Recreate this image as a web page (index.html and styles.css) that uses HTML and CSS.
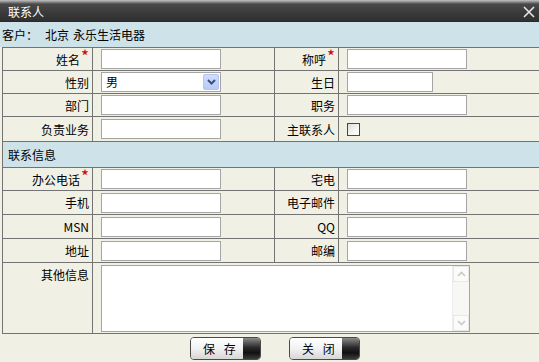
FILE: index.html
```html
<!DOCTYPE html>
<html lang="zh-CN">
<head>
  <meta charset="UTF-8">
  <title>联系人</title>
  <link rel="stylesheet" href="styles.css">
</head>
<body>
  <div class="dialog">
    <div class="titlebar">
      <span class="title">联系人</span>
      <svg class="close" width="12" height="12" viewBox="0 0 12 12">
        <path d="M1 1 L11 11 M11 1 L1 11" stroke="#e6e6e6" stroke-width="1.6" fill="none"/>
      </svg>
    </div>

    <div class="customer">
      <span class="cust-label">客户：</span>
      <span class="cust-city">北京</span>
      <span class="cust-name">永乐生活电器</span>
    </div>

    <table class="form">
      <colgroup>
        <col class="c1">
        <col class="c2">
        <col class="c3">
        <col>
      </colgroup>
      <tr>
        <th>姓名<span class="req">*</span></th>
        <td><input class="text" type="text"></td>
        <th>称呼<span class="req">*</span></th>
        <td><input class="text" type="text"></td>
      </tr>
      <tr>
        <th>性别</th>
        <td>
          <div class="select">
            <span class="select-value">男</span>
            <span class="select-btn">
              <svg width="9" height="6" viewBox="0 0 9 6"><path d="M1 1 L4.5 4.5 L8 1" stroke="#3d4f7a" stroke-width="2" fill="none"/></svg>
            </span>
          </div>
        </td>
        <th>生日</th>
        <td><input class="text short" type="text"></td>
      </tr>
      <tr>
        <th>部门</th>
        <td><input class="text" type="text"></td>
        <th>职务</th>
        <td><input class="text" type="text"></td>
      </tr>
      <tr class="tall">
        <th>负责业务</th>
        <td><input class="text" type="text"></td>
        <th>主联系人</th>
        <td><span class="checkbox"></span></td>
      </tr>
      <tr class="section">
        <td colspan="4">联系信息</td>
      </tr>
      <tr>
        <th>办公电话<span class="req">*</span></th>
        <td><input class="text" type="text"></td>
        <th>宅电</th>
        <td><input class="text" type="text"></td>
      </tr>
      <tr class="wide">
        <th>手机</th>
        <td><input class="text" type="text"></td>
        <th>电子邮件</th>
        <td><input class="text" type="text"></td>
      </tr>
      <tr class="wide">
        <th>MSN</th>
        <td><input class="text" type="text"></td>
        <th>QQ</th>
        <td><input class="text" type="text"></td>
      </tr>
      <tr class="wide">
        <th>地址</th>
        <td><input class="text" type="text"></td>
        <th>邮编</th>
        <td><input class="text" type="text"></td>
      </tr>
      <tr class="memo">
        <th>其他信息</th>
        <td colspan="3">
          <div class="textarea">
            <div class="textarea-body"></div>
            <div class="scrollbar">
              <span class="arrow up">
                <svg width="9" height="6" viewBox="0 0 9 6"><path d="M1 5 L4.5 1.5 L8 5" stroke="#c9c9c9" stroke-width="1.6" fill="none"/></svg>
              </span>
              <span class="arrow down">
                <svg width="9" height="6" viewBox="0 0 9 6"><path d="M1 1 L4.5 4.5 L8 1" stroke="#c9c9c9" stroke-width="1.6" fill="none"/></svg>
              </span>
            </div>
          </div>
        </td>
      </tr>
    </table>

    <div class="actions">
      <button class="btn"><span class="btn-text">保 存</span><span class="btn-end"></span></button>
      <button class="btn"><span class="btn-text">关 闭</span><span class="btn-end"></span></button>
    </div>
  </div>
</body>
</html>
```

FILE: styles.css
```css
/* Page */
body {
  margin: 0;
  font-family: "Noto Sans CJK SC", "DejaVu Sans", sans-serif;
  font-size: 12px;
  color: #000;
  background: #f1f0e5;
  overflow: hidden;
}

.dialog {
  width: 539px;
  height: 362px;
  background: #f1f0e5;
}

/* Title bar */
.titlebar {
  height: 21px;
  display: flex;
  align-items: center;
  justify-content: space-between;
  padding: 0 4px 0 8px;
  background: linear-gradient(#c2c2c2 0, #8a8a8a 2px, #4a4a4a 4px, #3a3a3a 60%, #303030 100%);
  border-bottom: 1px solid #2a2a2a;
}

.title {
  color: #fff;
  font-size: 12px;
  line-height: 21px;
  padding-top: 1px;
}

.close {
  margin-top: 2px;
}

/* Customer line */
.customer {
  height: 25px;
  display: flex;
  align-items: center;
  padding-left: 2px;
  background: #cee2e9;
}

.cust-label {
  width: 43px;
}

.cust-city {
  margin-right: 4px;
}

/* Form table */
.form {
  border-collapse: collapse;
  table-layout: fixed;
  width: 537px;
  margin-left: 2px;
}

.form .c1 { width: 90px; }
.form .c2 { width: 182px; }
.form .c3 { width: 64px; }

.form th,
.form td {
  border: 1px solid #737373;
  height: 22px;
  padding: 0;
  vertical-align: middle;
}

.form tr > :last-child {
  border-right: none;
}

.form th {
  font-weight: normal;
  text-align: right;
  padding-right: 3px;
  white-space: nowrap;
}

.form td {
  padding-left: 8px;
}

.form tr.tall th,
.form tr.tall td {
  height: 24px;
}

.form tr.wide th,
.form tr.wide td {
  height: 23px;
}

.req {
  color: #d40000;
  font-size: 17px;
  line-height: 0;
  vertical-align: 2px;
  margin-left: 1px;
}

.form tr.section td {
  height: 25px;
  padding-left: 5px;
  background: #cee2e9;
}

.form tr.memo th {
  vertical-align: top;
  padding-top: 3px;
  height: 67px;
}

.form tr.memo td {
  vertical-align: top;
  padding-top: 2px;
  height: 68px;
}

/* Inputs */
.text {
  display: block;
  box-sizing: border-box;
  width: 120px;
  height: 20px;
  margin: 0;
  padding: 0 3px;
  border: 1px solid #a5a5a5;
  background: #fff;
  font: inherit;
}

.text.short {
  width: 86px;
}

.select {
  display: flex;
  box-sizing: border-box;
  width: 120px;
  height: 20px;
  border: 1px solid #a5a5a5;
  background: #fff;
  padding: 1px;
}

.select-value {
  flex: 1;
  padding-left: 3px;
  line-height: 16px;
}

.select-btn {
  width: 16px;
  display: flex;
  align-items: center;
  justify-content: center;
  background: linear-gradient(#cfdcfd, #b8cbf8);
  border: 1px solid #b3c5f2;
  box-sizing: border-box;
  border-radius: 2px;
}

.checkbox {
  display: block;
  width: 13px;
  height: 13px;
  box-sizing: border-box;
  border: 1px solid #1c5180;
  background: linear-gradient(135deg, #dcdcd6, #f6f6f4 60%, #ffffff);
}

/* Memo */
.textarea {
  display: flex;
  box-sizing: border-box;
  width: 369px;
  height: 67px;
  border: 1px solid #a5a5a5;
  background: #fff;
}

.textarea-body {
  flex: 1;
}

.scrollbar {
  width: 16px;
  display: flex;
  flex-direction: column;
  justify-content: space-between;
  background: #f7f7f3;
  border-left: 1px solid #ededed;
}

.arrow {
  height: 16px;
  display: flex;
  align-items: center;
  justify-content: center;
  background: #fbfbf9;
  border: 1px solid #e8e8e4;
  box-sizing: border-box;
}

/* Buttons */
.actions {
  display: flex;
  justify-content: center;
  gap: 28px;
  padding: 3px 0 0 11px;
}

.btn {
  display: flex;
  width: 71px;
  height: 23px;
  padding: 0;
  border: 1px solid #4a4a4a;
  border-radius: 4px;
  overflow: hidden;
  background: none;
  font: inherit;
  cursor: pointer;
}

.btn-text {
  flex: 1;
  text-align: left;
  line-height: 21px;
  letter-spacing: 3px;
  padding-left: 12px;
  color: #000;
  background: linear-gradient(#ffffff, #f2f2f2 50%, #d6d6d6);
}

.btn-end {
  width: 17px;
  background: linear-gradient(#8a8a8a, #2a2a2a 45%, #111 70%, #3a3a3a);
}
```
